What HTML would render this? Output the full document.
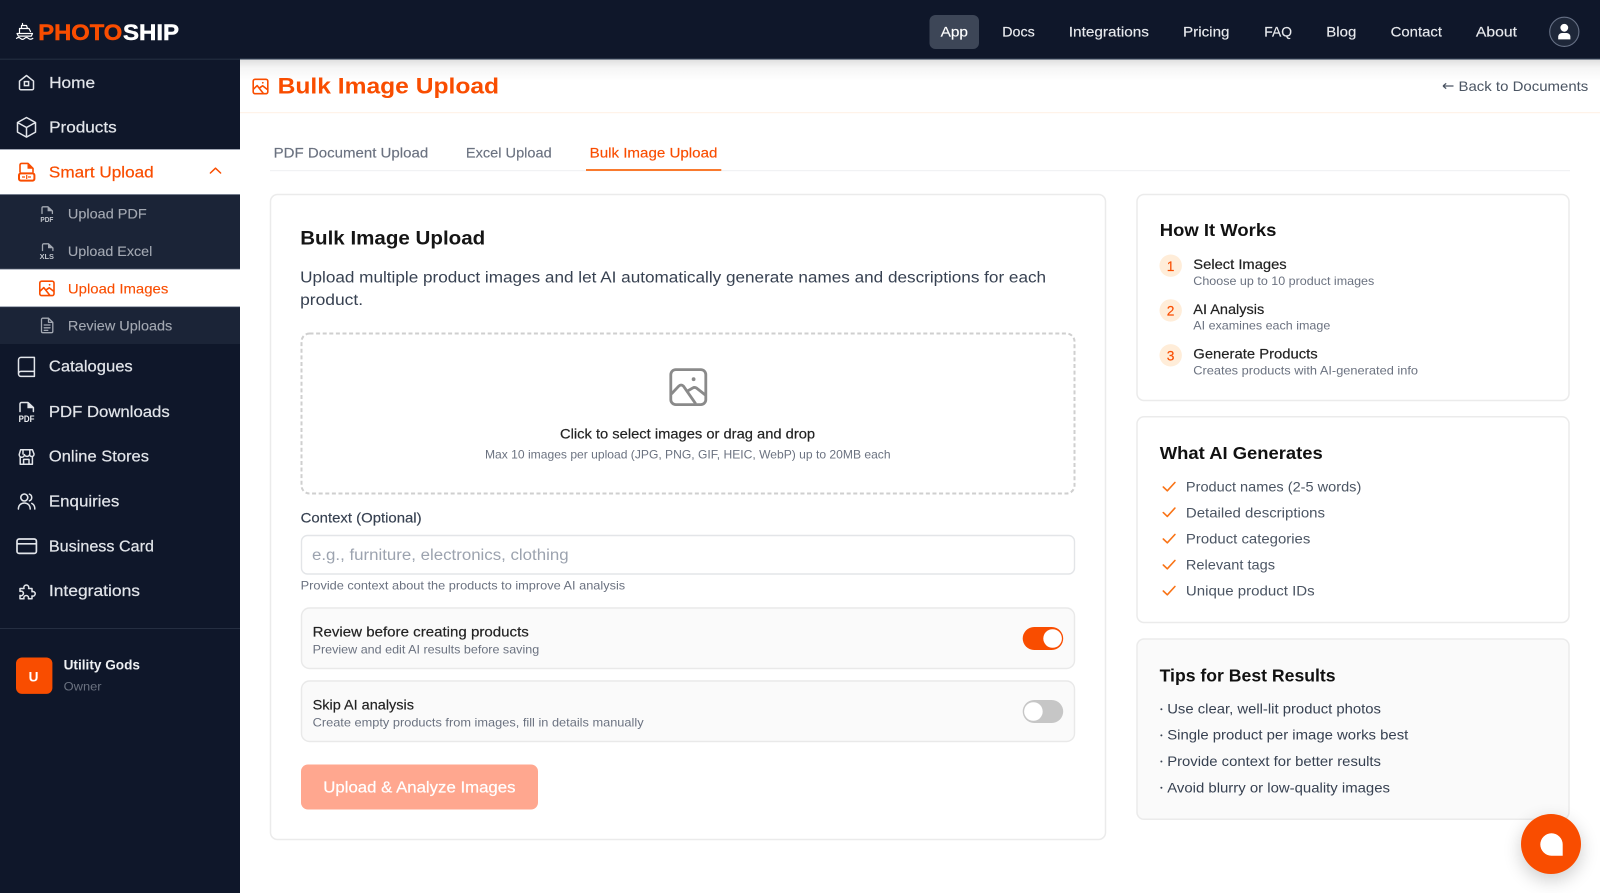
<!DOCTYPE html>
<html lang="en">
<head>
<meta charset="utf-8">
<title>Bulk Image Upload</title>
<style>
html,body{margin:0;padding:0;background:#fff;width:1600px;height:893px;overflow:hidden}
svg{display:block;position:absolute;left:0;top:0}
text{font-family:"Liberation Sans",Arial,sans-serif;white-space:pre;transform:translate(-.4px,.4px)}
.side{font-size:15.4px;fill:#e2e5ea;stroke:#e2e5ea;stroke-width:.2}
.sub{font-size:13.8px;fill:#a3a8b2;stroke:#a3a8b2;stroke-width:.12}
.top{font-size:14px;fill:#e8eaee;stroke:#e8eaee;stroke-width:.15}
.tab{font-size:13.8px;fill:#6b7280;stroke:#6b7280;stroke-width:.15}
.hd{font-size:17.4px;font-weight:700;fill:#111}
.m{font-size:13.8px;fill:#222;stroke:#222;stroke-width:.18}
.s{font-size:11.8px;fill:#6b7280}
.li{font-size:13.8px;fill:#4b5563}
.tip{font-size:13.8px;fill:#374151}
.num{font-size:13.8px;fill:#f94d00;text-anchor:middle;stroke:#f94d00;stroke-width:.15}
.ic{fill:none;stroke:#e2e5ea;stroke-width:1.5;stroke-linecap:round;stroke-linejoin:round}
.ico{fill:none;stroke:#f94d00;stroke-width:1.6;stroke-linecap:round;stroke-linejoin:round}
.isub{fill:none;stroke:#a3a8b2;stroke-width:1.3;stroke-linecap:round;stroke-linejoin:round}
.chk{fill:none;stroke:#f97316;stroke-width:1.6;stroke-linecap:round;stroke-linejoin:round}
.card{fill:#fff;stroke:#ebebeb;stroke-width:1.5}
</style>
</head>
<body>
<svg width="1600" height="893" viewBox="0 0 1600 893" xmlns="http://www.w3.org/2000/svg">
<defs>
<linearGradient id="hs" x1="0" y1="0" x2="0" y2="1"><stop offset="0" stop-color="#000" stop-opacity=".13"/><stop offset=".4" stop-color="#000" stop-opacity=".04"/><stop offset="1" stop-color="#000" stop-opacity="0"/></linearGradient>
<filter id="blur" x="-50%" y="-50%" width="200%" height="200%"><feGaussianBlur stdDeviation="9"/></filter>
</defs>
<rect width="1600" height="893" fill="#fff"/>

<!-- page header -->
<rect x="240" y="59" width="1360" height="22" fill="url(#hs)"/>
<rect x="240" y="112" width="1360" height="1.2" fill="#fff3e9"/>
<path class="ico" d="M255 79.3h11a1.8 1.8 0 0 1 1.8 1.8v10.8a1.8 1.8 0 0 1-1.8 1.8h-11a1.8 1.8 0 0 1-1.8-1.8V81.1a1.8 1.8 0 0 1 1.8-1.8zM253.6 89l3.6-3.4 6 7.6M260.2 87.4l2.4-1.6 4.6 3.6" stroke-width="1.4"/>
<circle cx="262.8" cy="82.8" r=".9" fill="#f94d00"/>
<text x="278" y="93.2" textLength="221.5" lengthAdjust="spacingAndGlyphs" style="font-size:22.6px;font-weight:700;fill:#f94d00">Bulk Image Upload</text>
<path d="M1443 86h10.5M1443 86l3.2-2.6M1443 86l3.2 2.6" stroke="#4b5563" stroke-width="1.2" fill="none"/>
<text x="1458.9" y="90.7" textLength="129.8" lengthAdjust="spacingAndGlyphs" style="font-size:13.8px;fill:#4b5563">Back to Documents</text>

<!-- tabs -->
<rect x="270" y="170" width="1300" height="1.2" fill="#f1f2f4"/>
<text class="tab" x="274" y="157.3" textLength="154.6" lengthAdjust="spacingAndGlyphs">PDF Document Upload</text>
<text class="tab" x="466.3" y="157.3" textLength="85.8" lengthAdjust="spacingAndGlyphs">Excel Upload</text>
<text class="tab" x="590" y="157.3" textLength="127.8" lengthAdjust="spacingAndGlyphs" style="fill:#f94d00;stroke:#f94d00">Bulk Image Upload</text>
<rect x="586" y="169" width="135.3" height="2" fill="#f97a2e"/>

<!-- main card -->
<rect class="card" x="270.5" y="194.5" width="835" height="645" rx="7"/>
<text x="300.6" y="244.1" textLength="185" lengthAdjust="spacingAndGlyphs" style="font-size:19.4px;font-weight:700;fill:#151515">Bulk Image Upload</text>
<text x="300.5" y="282" textLength="746" lengthAdjust="spacingAndGlyphs" style="font-size:15.4px;fill:#374151">Upload multiple product images and let AI automatically generate names and descriptions for each</text>
<text x="300.5" y="304.5" textLength="63" lengthAdjust="spacingAndGlyphs" style="font-size:15.4px;fill:#374151">product.</text>

<rect x="301.5" y="333.5" width="773" height="160" rx="8" fill="#fff" stroke="#cfcfcf" stroke-width="2" stroke-dasharray="4 2.6"/>
<g fill="none" stroke="#8a8a8a" stroke-width="2.8" stroke-linecap="round" stroke-linejoin="round">
<rect x="670.8" y="369.6" width="35" height="35" rx="5"/>
<path d="M671.8 393.5l7-7.4c1.4-1.4 3.2-1.4 4.6 0l11.8 17M688.4 390.5l4.4-2.6c1.2-.7 2.6-.6 3.8.2l8.6 6.8"/>
</g>
<circle cx="693.6" cy="379.2" r="1.9" fill="#8a8a8a"/>
<text class="m" x="560.4" y="438.3" textLength="255.1" lengthAdjust="spacingAndGlyphs">Click to select images or drag and drop</text>
<text class="s" x="485.4" y="458.3" textLength="405.6" lengthAdjust="spacingAndGlyphs">Max 10 images per upload (JPG, PNG, GIF, HEIC, WebP) up to 20MB each</text>

<text class="m" x="301" y="522.3" textLength="121" lengthAdjust="spacingAndGlyphs" style="fill:#374151;stroke:#374151">Context (Optional)</text>
<rect x="301.5" y="535.5" width="773" height="38.5" rx="6" fill="#fff" stroke="#e3e5e8" stroke-width="1.4"/>
<text x="312.4" y="559.5" textLength="256.6" lengthAdjust="spacingAndGlyphs" style="font-size:15.4px;fill:#9ca3af">e.g., furniture, electronics, clothing</text>
<text class="s" x="301" y="588.9" textLength="324.6" lengthAdjust="spacingAndGlyphs">Provide context about the products to improve AI analysis</text>

<rect x="301.5" y="608" width="773" height="60.5" rx="8" fill="#fafafa" stroke="#e9e9e9" stroke-width="1.4"/>
<text class="m" x="313" y="636.2" textLength="216.2" lengthAdjust="spacingAndGlyphs">Review before creating products</text>
<text class="s" x="313" y="653.3" textLength="226.6" lengthAdjust="spacingAndGlyphs">Preview and edit AI results before saving</text>
<rect x="1022.7" y="627" width="40.5" height="23" rx="11.5" fill="#f94d00"/>
<circle cx="1052.6" cy="638.5" r="9.3" fill="#fff"/>

<rect x="301.5" y="681" width="773" height="60.5" rx="8" fill="#fafafa" stroke="#e9e9e9" stroke-width="1.4"/>
<text class="m" x="313" y="709" textLength="101.4" lengthAdjust="spacingAndGlyphs">Skip AI analysis</text>
<text class="s" x="313" y="726.3" textLength="331" lengthAdjust="spacingAndGlyphs">Create empty products from images, fill in details manually</text>
<rect x="1022.7" y="700" width="40.5" height="23" rx="11.5" fill="#c6c6c6"/>
<circle cx="1033.4" cy="711.5" r="9.3" fill="#fff"/>

<rect x="301" y="764.5" width="237" height="45" rx="7" fill="#ffa78f"/>
<text x="323.7" y="792.2" textLength="192.2" lengthAdjust="spacingAndGlyphs" style="font-size:15.4px;fill:#fff;stroke:#fff;stroke-width:.2">Upload &amp; Analyze Images</text>

<!-- How it works -->
<rect class="card" x="1137" y="194.5" width="432" height="206" rx="7"/>
<text class="hd" x="1160.2" y="235.8" textLength="116.6" lengthAdjust="spacingAndGlyphs">How It Works</text>
<circle cx="1170.7" cy="265.7" r="11.2" fill="#ffedd9"/>
<text class="num" x="1171" y="270.4">1</text>
<circle cx="1170.7" cy="310.4" r="11.2" fill="#ffedd9"/>
<text class="num" x="1171" y="315.1">2</text>
<circle cx="1170.7" cy="355.3" r="11.2" fill="#ffedd9"/>
<text class="num" x="1171" y="360">3</text>
<text class="m" x="1193.7" y="268.7" textLength="93.4" lengthAdjust="spacingAndGlyphs">Select Images</text>
<text class="s" x="1193.7" y="284.7" textLength="181" lengthAdjust="spacingAndGlyphs">Choose up to 10 product images</text>
<text class="m" x="1193.7" y="313.7" textLength="71" lengthAdjust="spacingAndGlyphs">AI Analysis</text>
<text class="s" x="1193.7" y="328.9" textLength="137" lengthAdjust="spacingAndGlyphs">AI examines each image</text>
<text class="m" x="1193.7" y="358" textLength="124.4" lengthAdjust="spacingAndGlyphs">Generate Products</text>
<text class="s" x="1193.7" y="374" textLength="224.7" lengthAdjust="spacingAndGlyphs">Creates products with AI-generated info</text>

<!-- What AI generates -->
<rect class="card" x="1137" y="416.8" width="432" height="205.7" rx="7"/>
<text class="hd" x="1160.2" y="458.7" textLength="163" lengthAdjust="spacingAndGlyphs">What AI Generates</text>
<path class="chk" d="M1163.3 487l4 3.8 7.6-8.3M1163.3 512.6l4 3.8 7.6-8.3M1163.3 539l4 3.8 7.6-8.3M1163.3 565l4 3.8 7.6-8.3M1163.3 591l4 3.8 7.6-8.3"/>
<text class="li" x="1186.3" y="491" textLength="175.4" lengthAdjust="spacingAndGlyphs">Product names (2-5 words)</text>
<text class="li" x="1186.3" y="517" textLength="139.1" lengthAdjust="spacingAndGlyphs">Detailed descriptions</text>
<text class="li" x="1186.3" y="543.3" textLength="124.4" lengthAdjust="spacingAndGlyphs">Product categories</text>
<text class="li" x="1186.3" y="569.3" textLength="89.1" lengthAdjust="spacingAndGlyphs">Relevant tags</text>
<text class="li" x="1186.3" y="595.3" textLength="128.8" lengthAdjust="spacingAndGlyphs">Unique product IDs</text>

<!-- Tips -->
<rect x="1137" y="639" width="432" height="180.3" rx="7" fill="#fafafa" stroke="#ebebeb" stroke-width="1.5"/>
<text class="hd" x="1160" y="681.3" textLength="176" lengthAdjust="spacingAndGlyphs">Tips for Best Results</text>
<g fill="#374151">
<circle cx="1161.4" cy="709.2" r="1"/><circle cx="1161.4" cy="735.4" r="1"/><circle cx="1161.4" cy="761.5" r="1"/><circle cx="1161.4" cy="787.7" r="1"/>
</g>
<text class="tip" x="1167.6" y="713.3" textLength="213.8" lengthAdjust="spacingAndGlyphs">Use clear, well-lit product photos</text>
<text class="tip" x="1167.6" y="739.3" textLength="241.1" lengthAdjust="spacingAndGlyphs">Single product per image works best</text>
<text class="tip" x="1167.6" y="765.7" textLength="213.8" lengthAdjust="spacingAndGlyphs">Provide context for better results</text>
<text class="tip" x="1167.6" y="792" textLength="222.8" lengthAdjust="spacingAndGlyphs">Avoid blurry or low-quality images</text>

<!-- sidebar -->
<rect x="0" y="59" width="240" height="834" fill="#0f172a"/>
<rect x="0" y="194.3" width="240" height="149.7" fill="#1b2437"/>
<rect x="0" y="149.3" width="240" height="45" fill="#fff"/>
<rect x="0" y="269.1" width="240" height="37.4" fill="#fff"/>
<rect x="0" y="149" width="240" height=".8" fill="#8b93a3"/>
<rect x="0" y="194" width="240" height=".8" fill="#8b93a3"/>
<rect x="0" y="268.8" width="240" height=".8" fill="#8b93a3"/>
<rect x="0" y="306.3" width="240" height=".8" fill="#8b93a3"/>
<rect x="0" y="628" width="240" height="1" fill="#252e41"/>

<!-- sidebar icons -->
<path class="ic" d="M26.5 75.5l-7 5.6v7.4a1.2 1.2 0 0 0 1.2 1.2h11.6a1.2 1.2 0 0 0 1.2-1.2v-7.4z" stroke-width="1.6"/>
<rect x="24.4" y="81.6" width="4.2" height="4" fill="none" stroke="#e2e5ea" stroke-width="1.5"/>
<path class="ic" d="M26.5 117.5l9 5v9.6l-9 5-9-5v-9.6zM17.5 122.5l9 5 9-5M26.5 127.5v9.6" stroke-width="1.9"/>
<path class="ico" d="M20 172v-7a1.6 1.6 0 0 1 1.6-1.6H28l5 5V172" stroke-width="2"/>
<path d="M27.5 163v5.8h5.8z" fill="#f94d00"/>
<rect x="19" y="173.4" width="15.4" height="7.2" rx="1.8" fill="none" stroke="#f94d00" stroke-width="2"/>
<path d="M22 177h3M28 177h3M26.7 175v4" stroke="#f94d00" stroke-width="1.2" fill="none"/>
<path d="M210.4 173l5.1-4.8 5.1 4.8" fill="none" stroke="#f94d00" stroke-width="1.5" stroke-linecap="round" stroke-linejoin="round"/>

<path class="isub" d="M42 213.5v-5.5a1.2 1.2 0 0 1 1.2-1.2H48l4.4 4.2v2.5" stroke-width="1.5"/>
<path d="M47.6 206.5v4.8h5z" fill="#a3a8b2"/>
<text x="40.8" y="221.6" textLength="13" lengthAdjust="spacingAndGlyphs" style="font-size:7.6px;font-weight:700;fill:#c1c5cc">PDF</text>
<path class="isub" d="M42.5 250.5v-5.5a1.2 1.2 0 0 1 1.2-1.2h4.8l4.4 4.2v2.5" stroke-width="1.5"/>
<path d="M48 243.5v4.8h5z" fill="#a3a8b2"/>
<text x="40" y="258.8" textLength="14.4" lengthAdjust="spacingAndGlyphs" style="font-size:7.6px;font-weight:700;fill:#c1c5cc">XLS</text>
<path class="ico" d="M41.6 281.2h10.6a1.8 1.8 0 0 1 1.8 1.8v10.8a1.8 1.8 0 0 1-1.8 1.8H41.6a1.8 1.8 0 0 1-1.8-1.8V283a1.8 1.8 0 0 1 1.8-1.8zM40.2 291l3.6-3.4 6 7.6M46.8 289.4l2.4-1.6 4.6 3.6" stroke-width="1.5"/>
<circle cx="49.6" cy="284.8" r=".9" fill="#f94d00"/>
<path class="isub" d="M42.8 318.2H48.5l4.3 4.2v9a1.3 1.3 0 0 1-1.3 1.3h-8.7a1.3 1.3 0 0 1-1.3-1.3v-11.9a1.3 1.3 0 0 1 1.3-1.3zM48.5 318.2v4.2h4.3M44.2 325h5.8M44.2 327.8h5.8M44.2 330.4h3.6" stroke-width="1.4"/>

<path class="ic" d="M21 357.4h13.4v19H21a2.5 2.5 0 0 1-2.5-2.5v-14a2.5 2.5 0 0 1 2.5-2.5zM18.5 374a2.6 2.6 0 0 1 2.5-2.6h13.4" stroke-width="1.9"/>

<path class="ic" d="M20 411.5V404a1.5 1.5 0 0 1 1.5-1.5H28l5.4 5v4" stroke-width="1.9"/>
<path d="M27.4 402v6.2h6.6z" fill="#e2e5ea"/>
<text x="19" y="421.8" textLength="15.8" lengthAdjust="spacingAndGlyphs" style="font-size:9.6px;font-weight:700;fill:#eef0f3">PDF</text>

<path class="ic" d="M20.6 449.8h11.8l1.6 4.2a2.2 2.2 0 0 1-4.4.6 2.8 2.8 0 0 1-5.2 0 2.6 2.6 0 0 1-5.2 0zM20.2 456.8v7.4h12.2v-7.4M23.6 464.2v-4.8h5.4v4.8M23 450v4M29.8 450v4" stroke-width="1.5"/>

<circle cx="24.3" cy="497.5" r="3.5" fill="none" stroke="#e2e5ea" stroke-width="1.6"/>
<path class="ic" d="M18.4 509c0-3.8 2.6-6 5.9-6s5.9 2.2 5.9 6M29.4 494.2a3.5 3.5 0 0 1 0 6.6M31.8 503.4c1.9.8 3 2.8 3 5.6" stroke-width="1.5"/>

<rect x="17" y="539" width="19.4" height="14.4" rx="2.2" fill="none" stroke="#e2e5ea" stroke-width="1.7"/>
<path d="M17 543.8h19.4" stroke="#e2e5ea" stroke-width="1.6" fill="none"/>

<path class="ic" d="M24 588.5a2.5 2.5 0 1 1 4.6 0H32v3.2a2.3 2.3 0 1 1 0 4.2V598.8H28.4a2.4 2.4 0 1 0-4.4 0H20v-3.4a2.3 2.3 0 1 0 0-4V588.5z" stroke-width="1.4"/>

<text class="side" x="49.5" y="87.5" textLength="46" lengthAdjust="spacingAndGlyphs">Home</text>
<text class="side" x="49.5" y="132.3" textLength="67.6" lengthAdjust="spacingAndGlyphs">Products</text>
<text class="side" x="49.3" y="176.9" textLength="104.8" lengthAdjust="spacingAndGlyphs" style="fill:#f94d00;stroke:#f94d00">Smart Upload</text>
<text class="sub" x="68.3" y="218" textLength="78.8" lengthAdjust="spacingAndGlyphs">Upload PDF</text>
<text class="sub" x="68.3" y="255.7" textLength="84.4" lengthAdjust="spacingAndGlyphs">Upload Excel</text>
<text class="sub" x="68.3" y="293" textLength="100.4" lengthAdjust="spacingAndGlyphs" style="fill:#f94d00;stroke:#f94d00">Upload Images</text>
<text class="sub" x="68.3" y="330" textLength="104.4" lengthAdjust="spacingAndGlyphs">Review Uploads</text>
<text class="side" x="49.3" y="371.3" textLength="83.8" lengthAdjust="spacingAndGlyphs">Catalogues</text>
<text class="side" x="49.3" y="416.4" textLength="120.8" lengthAdjust="spacingAndGlyphs">PDF Downloads</text>
<text class="side" x="49.3" y="461.3" textLength="100.1" lengthAdjust="spacingAndGlyphs">Online Stores</text>
<text class="side" x="49.3" y="506.3" textLength="70.4" lengthAdjust="spacingAndGlyphs">Enquiries</text>
<text class="side" x="49.3" y="551" textLength="105.1" lengthAdjust="spacingAndGlyphs">Business Card</text>
<text class="side" x="49.3" y="595.8" textLength="91.1" lengthAdjust="spacingAndGlyphs">Integrations</text>

<rect x="16" y="657.5" width="36.4" height="36.4" rx="6" fill="#f94d00"/>
<text x="34" y="681" text-anchor="middle" style="font-size:13.6px;font-weight:700;fill:#fff">U</text>
<text x="64" y="669.3" textLength="76.4" lengthAdjust="spacingAndGlyphs" style="font-size:13.8px;font-weight:700;fill:#eef0f3">Utility Gods</text>
<text x="64" y="690.3" textLength="38" lengthAdjust="spacingAndGlyphs" style="font-size:11.8px;fill:#6b7280">Owner</text>

<!-- header -->
<rect x="0" y="0" width="1600" height="59" fill="#0f172a"/>
<rect x="0" y="58.6" width="240" height="1.2" fill="#232c3f"/>
<rect x="240" y="58.6" width="1360" height="1" fill="#475569"/>
<path d="M19.5 33.5v-5h9.5l1.5 3M21.5 28.5v-3h5l1 3M22.5 25.5v-2M17 33.5h15.5l-1.2 2.6H18.4zM16.5 38.4c1.3-1.2 2.7-1.2 4 0s2.7 1.2 4 0 2.7-1.2 4 0 2.7 1.2 4.3 0" fill="none" stroke="#fff" stroke-width="1.2" stroke-linecap="round" stroke-linejoin="round"/>
<text x="38.7" y="39.7" textLength="84" lengthAdjust="spacingAndGlyphs" style="font-size:22.6px;font-weight:700;fill:#f94d00;stroke:#f94d00;stroke-width:.5">PHOTO</text>
<text x="123.4" y="39.7" textLength="56" lengthAdjust="spacingAndGlyphs" style="font-size:22.6px;font-weight:700;fill:#fff;stroke:#fff;stroke-width:.5">SHIP</text>

<rect x="929.5" y="15" width="49.5" height="34" rx="6" fill="#3d4657"/>
<text class="top" x="941" y="36.3" textLength="27.4" lengthAdjust="spacingAndGlyphs" style="fill:#fff;stroke:#fff">App</text>
<text class="top" x="1002.6" y="36.3" textLength="32.6" lengthAdjust="spacingAndGlyphs">Docs</text>
<text class="top" x="1069.2" y="36.3" textLength="80.2" lengthAdjust="spacingAndGlyphs">Integrations</text>
<text class="top" x="1183.4" y="36.3" textLength="46.5" lengthAdjust="spacingAndGlyphs">Pricing</text>
<text class="top" x="1264.7" y="36.3" textLength="27.7" lengthAdjust="spacingAndGlyphs">FAQ</text>
<text class="top" x="1326.7" y="36.3" textLength="30" lengthAdjust="spacingAndGlyphs">Blog</text>
<text class="top" x="1391" y="36.3" textLength="51.4" lengthAdjust="spacingAndGlyphs">Contact</text>
<text class="top" x="1476.3" y="36.3" textLength="41.1" lengthAdjust="spacingAndGlyphs">About</text>
<circle cx="1564.3" cy="31.8" r="14.6" fill="#1e2739" stroke="#667085" stroke-width="1.1"/>
<circle cx="1564.3" cy="27.8" r="3.9" fill="#fff"/>
<path d="M1558.2 39.4v-2.6c0-2.4 2-3.8 3.8-3.8h4.6c1.8 0 3.8 1.4 3.8 3.8v2.6z" fill="#fff"/>

<!-- chat button -->
<circle cx="1551" cy="850" r="30" fill="#000" opacity=".2" filter="url(#blur)"/>
<circle cx="1551" cy="844" r="30" fill="#f94d00"/>
<path d="M1551.5 833.3a11.2 11.2 0 0 1 11.2 11.2v11.2h-11.2a11.2 11.2 0 0 1 0-22.4z" fill="#fff"/>
</svg>
</body>
</html>
